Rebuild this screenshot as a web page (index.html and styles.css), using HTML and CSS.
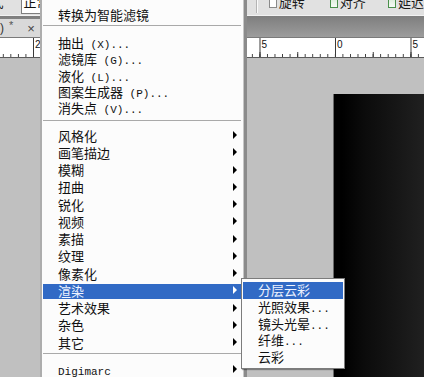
FILE: index.html
```html
<!DOCTYPE html>
<html lang="zh-CN">
<head>
<meta charset="utf-8">
<title>滤镜菜单</title>
<link rel="stylesheet" href="styles.css">
</head>
<body>
<div class="app">
  <div class="optbar">
    <span class="stub"><span class="cut">式</span></span>
    <div class="select"><span class="cut">正常</span></div>
    <div class="blue-edge"></div>
    <div class="vsep"></div>
    <span class="chk"></span><span class="opt-label"><span class="cut">旋转</span></span>
    <span class="chk on gap2"></span><span class="opt-label"><span class="cut">对齐</span></span>
    <span class="chk on gap3"></span><span class="opt-label"><span class="cut">延迟</span></span>
  </div>
  <div class="tabbar">
    <div class="tab"><span class="tab-paren">)</span><span class="tab-star">*</span><span class="tab-x">×</span></div>
  </div>
  <div class="ruler">
    <div class="ruler-labels">
      <span>25</span><span>20</span><span>15</span><span>10</span><span>5</span><span>0</span><span>5</span>
    </div>
  </div>
  <div class="workspace">
    <div class="doc"></div>
  </div>

  <div class="menu">
    <div class="mi first">转换为智能滤镜</div>
    <div class="sep s1"></div>
    <div class="g1">
      <div class="mi">抽出<span class="lat"> (X)...</span></div>
      <div class="mi">滤镜库<span class="lat"> (G)...</span></div>
      <div class="mi">液化<span class="lat"> (L)...</span></div>
      <div class="mi">图案生成器<span class="lat"> (P)...</span></div>
      <div class="mi">消失点<span class="lat"> (V)...</span></div>
    </div>
    <div class="sep s2"></div>
    <div class="g2">
      <div class="mi sub">风格化</div>
      <div class="mi sub">画笔描边</div>
      <div class="mi sub">模糊</div>
      <div class="mi sub">扭曲</div>
      <div class="mi sub">锐化</div>
      <div class="mi sub">视频</div>
      <div class="mi sub">素描</div>
      <div class="mi sub">纹理</div>
      <div class="mi sub">像素化</div>
      <div class="mi sub hl">渲染</div>
      <div class="mi sub">艺术效果</div>
      <div class="mi sub">杂色</div>
      <div class="mi sub">其它</div>
    </div>
    <div class="sep s3"></div>
    <div class="mi sub last"><span class="lat">Digimarc</span></div>
  </div>

  <div class="submenu">
    <div class="si hl">分层云彩</div>
    <div class="si">光照效果<span class="lat">...</span></div>
    <div class="si">镜头光晕<span class="lat">...</span></div>
    <div class="si">纤维<span class="lat">...</span></div>
    <div class="si">云彩</div>
  </div>
</div>
</body>
</html>
```

FILE: styles.css
```css
* {
  box-sizing: border-box;
  margin: 0;
  padding: 0;
}

body {
  margin: 0;
  width: 424px;
  height: 377px;
  overflow: hidden;
  background: #c0c0c0;
  font-family: "Noto Sans CJK SC", "Liberation Sans", sans-serif;
  color: #111;
}

.app {
  position: relative;
  width: 424px;
  height: 377px;
  overflow: hidden;
  display: flex;
  flex-direction: column;
}

/* ---------- options bar ---------- */
.optbar {
  height: 16px;
  flex: none;
  background: #e1e1e1;
  border-bottom: 1px solid #f2f2f2;
  display: flex;
  align-items: flex-start;
  overflow: hidden;
  font-size: 13px;
}

.cut {
  display: block;
  line-height: 14px;
  margin-top: -5px;
  white-space: nowrap;
}

.stub {
  width: 4px;
  overflow: hidden;
  direction: rtl;
}

.stub .cut {
  color: #222;
}

.select {
  margin-left: 17px;
  width: 30px;
  height: 14px;
  background: #fff;
  border-left: 1px solid #7f7f7f;
  border-bottom: 1px solid #7f7f7f;
  padding-left: 2px;
  overflow: hidden;
}

.blue-edge {
  margin-left: 195px;
  width: 5px;
  height: 11px;
  background: linear-gradient(to right, #9db8e4, #4e7bc6);
  border-bottom: 1px solid #3b5f9e;
}

.vsep {
  margin-left: 9px;
  width: 2px;
  height: 13px;
  border-left: 1px solid #b4b4b4;
  border-right: 1px solid #fafafa;
}

.chk {
  margin-left: 11px;
  width: 9px;
  height: 8px;
  background: #fff;
  border: 1px solid #8a8a8a;
  border-top: none;
}

.chk.on {
  border-color: #4a8f4a;
  background: linear-gradient(#dfeedd, #f6fbf5);
}

.chk.gap2 {
  margin-left: 25px;
}

.chk.gap3 {
  margin-left: 22px;
}

.opt-label {
  margin-left: 2px;
  color: #1a1a1a;
}

/* ---------- tab bar ---------- */
.tabbar {
  height: 21px;
  flex: none;
  background: linear-gradient(#7e7e7e, #9c9c9c);
  padding-top: 3px;
  display: flex;
}

.tab {
  width: 160px;
  height: 18px;
  background: #d9d9d9;
  display: flex;
  align-items: center;
  font-family: "Liberation Sans", sans-serif;
  font-size: 12px;
  color: #333;
}

.tab-paren {
  margin-left: 0;
}

.tab-star {
  margin-left: 5px;
  font-size: 11px;
  position: relative;
  top: -3px;
  color: #555;
}

.tab-x {
  margin-left: 14px;
  font-size: 13px;
  color: #444;
}

/* ---------- ruler ---------- */
.ruler {
  height: 21px;
  flex: none;
  border-top: 1px solid #7a7a7a;
  border-bottom: 1px solid #5a5a5a;
  background-color: #fff;
  background-image:
    linear-gradient(to right, #3a3a3a 1px, transparent 1px),
    linear-gradient(to right, #3a3a3a 1px, transparent 1px),
    linear-gradient(to right, #3a3a3a 1px, transparent 1px);
  background-size: 75.5px 100%, 37.75px 5px, 7.55px 3px;
  background-position: 33px 0, 33px 100%, 33px 100%;
  background-repeat: repeat-x;
  overflow: hidden;
}

.ruler-labels {
  display: flex;
  margin-left: -42.5px;
  padding-top: 1px;
}

.ruler-labels span {
  flex: none;
  width: 75.5px;
  padding-left: 2px;
  font-family: "Liberation Sans", sans-serif;
  font-size: 10px;
  line-height: 11px;
  color: #111;
}

/* ---------- workspace ---------- */
.workspace {
  flex: 1;
  background: #c0c0c0;
  overflow: hidden;
}

.doc {
  margin-left: 333px;
  margin-top: 36px;
  width: 100px;
  height: 300px;
  border-left: 1px solid #6a6a6a;
  background: linear-gradient(to right, #000 8%, #0b0b0b 30%, #171717 65%, #232323);
}

/* ---------- main menu ---------- */
.menu {
  position: absolute;
  left: 40px;
  top: 0;
  width: 204px;
  height: 400px;
  background: #fcfcfc;
  border-left: 2px solid #adadad;
  border-right: 1px solid #c6c6c6;
  box-shadow: 3px 0 0 -0px #8b8b8b;
  padding-left: 1px;
  padding-right: 1px;
}

.mi {
  position: relative;
  padding-left: 15px;
  font-size: 13px;
  white-space: nowrap;
  color: #111;
}

.first {
  margin-top: 7px;
  height: 16px;
  line-height: 16px;
}

.g1 .mi {
  height: 16.25px;
  line-height: 16.25px;
}

.g2 .mi {
  height: 17.25px;
  line-height: 17.25px;
}

.last {
  height: 17px;
  line-height: 17px;
}

.lat {
  font-family: "Liberation Mono", monospace;
  font-size: 11px;
  white-space: pre;
}

.sep {
  height: 1px;
  background: #a9a9a9;
  margin-left: 0;
  margin-right: 1px;
}

.s1 {
  margin-top: 2px;
  margin-bottom: 9px;
}

.s2 {
  margin-top: 3.75px;
  margin-bottom: 5.5px;
}

.s3 {
  margin-top: 2.25px;
  margin-bottom: 6.5px;
}

.sub::after {
  content: "";
  position: absolute;
  right: 5px;
  top: 50%;
  margin-top: -4px;
  border-left: 4px solid #000;
  border-top: 4px solid transparent;
  border-bottom: 4px solid transparent;
}

.mi.hl {
  background-image: linear-gradient(#316ac5, #316ac5);
  background-size: 100% 15px;
  background-position: 0 2px;
  background-repeat: no-repeat;
  color: #eef3ff;
}

.mi.hl::after {
  border-left-color: #fff;
}

/* ---------- submenu ---------- */
.submenu {
  position: absolute;
  left: 241px;
  top: 278px;
  width: 104px;
  background: #fcfcfc;
  border: 1px solid #7c7c7c;
  padding: 3px 1px 2px 1px;
  box-shadow: 1px 1px 1px rgba(0, 0, 0, 0.35);
}

.si {
  height: 16.75px;
  line-height: 16.75px;
  padding-left: 15px;
  font-size: 13px;
  white-space: nowrap;
  color: #111;
}

.si.hl {
  background: #316ac5;
  color: #eef3ff;
}
```
